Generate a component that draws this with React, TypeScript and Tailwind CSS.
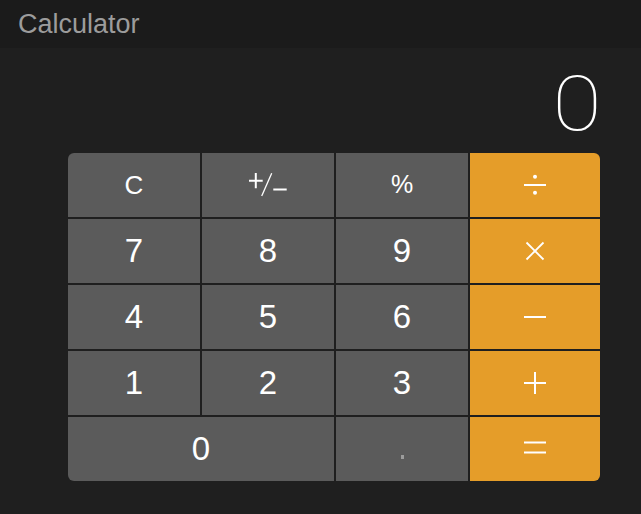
import React from "react";

const gray = "bg-[#5b5b5b]";
const orange = "bg-[#e59d29]";

function Key({ children, className = "" }: { children: React.ReactNode; className?: string }) {
  return (
    <div className={`flex items-center justify-center text-white ${className}`}>{children}</div>
  );
}

function Op({ kind }: { kind: "div" | "mul" | "sub" | "add" | "eq" }) {
  return (
    <svg width="24" height="24" viewBox="0 0 24 24" fill="none" stroke="white" strokeWidth="2">
      {kind === "div" && (
        <>
          <line x1="1" y1="12" x2="23" y2="12" />
          <circle cx="12" cy="3.8" r="2" fill="white" stroke="none" />
          <circle cx="12" cy="19.8" r="2" fill="white" stroke="none" />
        </>
      )}
      {kind === "mul" && (
        <>
          <line x1="3.5" y1="3.5" x2="20.5" y2="20.5" strokeWidth="1.8" />
          <line x1="20.5" y1="3.5" x2="3.5" y2="20.5" strokeWidth="1.8" />
        </>
      )}
      {kind === "sub" && <line x1="1" y1="12" x2="23" y2="12" />}
      {kind === "add" && (
        <>
          <line x1="1" y1="12" x2="23" y2="12" />
          <line x1="12" y1="1" x2="12" y2="23" />
        </>
      )}
      {kind === "eq" && (
        <>
          <line x1="1" y1="6.5" x2="23" y2="6.5" />
          <line x1="1" y1="16.5" x2="23" y2="16.5" />
        </>
      )}
    </svg>
  );
}

function PlusMinus() {
  return (
    <svg width="44" height="30" viewBox="0 0 44 30" fill="none" stroke="white">
      <line x1="3" y1="10.7" x2="16.7" y2="10.7" strokeWidth="2" />
      <line x1="9.8" y1="3" x2="9.8" y2="18.3" strokeWidth="2" />
      <line x1="25.7" y1="3.3" x2="15.7" y2="26" strokeWidth="1.3" />
      <line x1="27.3" y1="19.5" x2="40.7" y2="19.5" strokeWidth="2" />
    </svg>
  );
}

export default function App() {
  return (
    <div
      className="w-full h-screen min-h-[514px] bg-[#1f1f1f] flex flex-col"
      style={{ fontFamily: '"Liberation Sans", Arial, sans-serif' }}
    >
      <div className="h-[48px] bg-[#1b1b1b] flex items-center pl-[18px] shrink-0">
        <span className="text-[27px] text-[#9c9c9c] leading-none">Calculator</span>
      </div>
      <div className="flex flex-col pl-[68px] pr-[41px]">
        <div className="h-[105px] flex items-end justify-end pb-[11px]">
          <span
            className="inline-block text-[76px] leading-none font-thin text-white mr-[-2px] origin-right scale-x-[1.18]"
            style={{ fontFamily: 'Roboto, "Liberation Sans", sans-serif' }}
          >
            0
          </span>
        </div>
        <div className="grid grid-cols-[132px_132px_132px_130px] grid-rows-[64px_64px_64px_64px_64px] gap-[2px] rounded-[6px] overflow-hidden">
          <Key className={`${gray} text-[26px]`}>C</Key>
          <Key className={gray}>
            <PlusMinus />
          </Key>
          <Key className={`${gray} text-[25px]`}>%</Key>
          <Key className={orange}>
            <Op kind="div" />
          </Key>

          <Key className={`${gray} text-[33px]`}>7</Key>
          <Key className={`${gray} text-[33px]`}>8</Key>
          <Key className={`${gray} text-[33px]`}>9</Key>
          <Key className={orange}>
            <Op kind="mul" />
          </Key>

          <Key className={`${gray} text-[33px]`}>4</Key>
          <Key className={`${gray} text-[33px]`}>5</Key>
          <Key className={`${gray} text-[33px]`}>6</Key>
          <Key className={orange}>
            <Op kind="sub" />
          </Key>

          <Key className={`${gray} text-[33px]`}>1</Key>
          <Key className={`${gray} text-[33px]`}>2</Key>
          <Key className={`${gray} text-[33px]`}>3</Key>
          <Key className={orange}>
            <Op kind="add" />
          </Key>

          <Key className={`${gray} text-[33px] col-span-2`}>0</Key>
          <Key className={gray}>
            <span className="block w-[3px] h-[4px] bg-[#9c9c9c] relative top-[8px]" />
          </Key>
          <Key className={orange}>
            <span className="relative top-[-1px] flex">
              <Op kind="eq" />
            </span>
          </Key>
        </div>
      </div>
    </div>
  );
}
